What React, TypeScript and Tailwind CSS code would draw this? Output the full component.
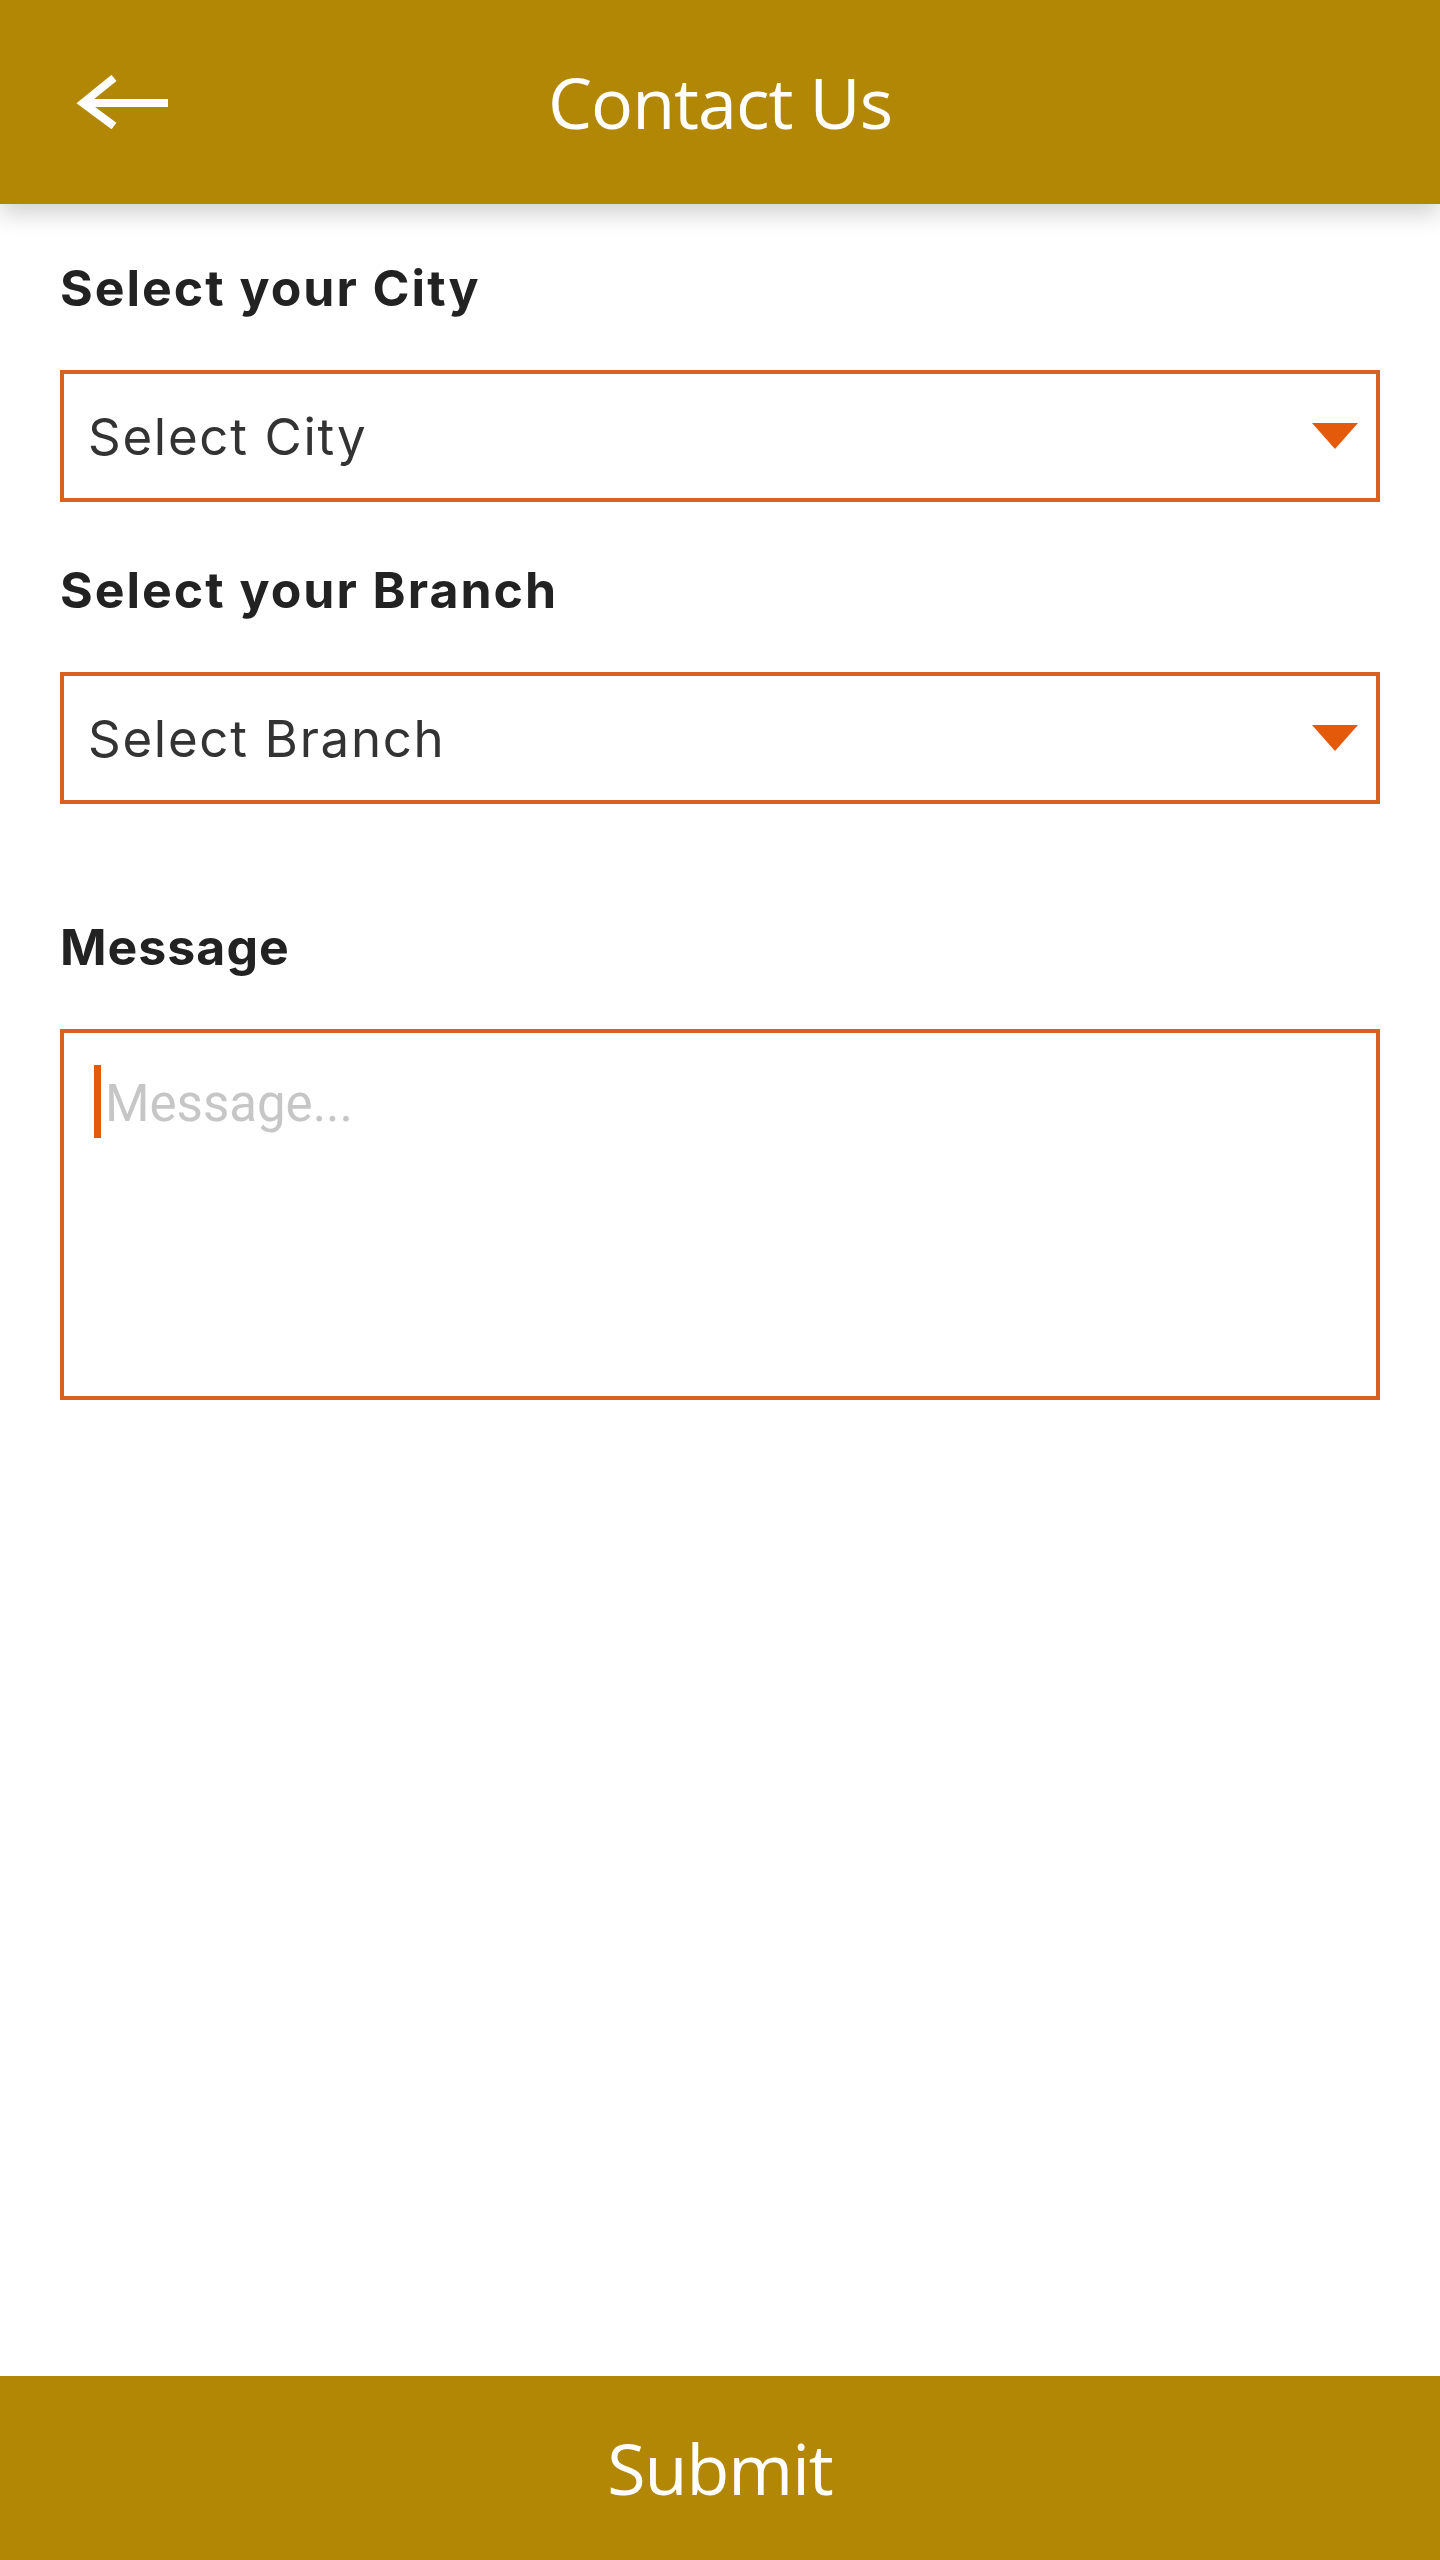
import { useState } from "react";

function BackArrow() {
  return (
    <svg width="96" height="56" viewBox="0 0 96 56" fill="none" className="block">
      <path d="M8 28 H94" stroke="white" strokeWidth="8" />
      <path d="M40 3 L9 28 L40 51" stroke="white" strokeWidth="8" strokeLinejoin="miter" />
    </svg>
  );
}

function Caret() {
  return (
    <svg width="46" height="26" viewBox="0 0 46 26" className="block">
      <polygon points="0,0 46,0 23,26" fill="#e35a0a" />
    </svg>
  );
}

function SelectBox({ placeholder }: { placeholder: string }) {
  return (
    <div className="flex h-[132px] w-full items-center justify-between border-4 border-[#d9611f] pl-[24px] pr-[18px]">
      <span className="text-[51px] leading-none tracking-[1.7px] text-[#333333] [font-family:Inter,'Liberation_Sans',sans-serif]">
        {placeholder}
      </span>
      <Caret />
    </div>
  );
}

export default function App() {
  const [message, setMessage] = useState("");

  return (
    <div className="flex min-h-screen flex-col bg-white">
      {/* Header */}
      <header className="relative z-10 flex h-[204px] items-center bg-[#b28706] shadow-[0_10px_22px_rgba(0,0,0,0.18)]">
        <button className="absolute left-[74px] top-[75px]">
          <BackArrow />
        </button>
        <h1 className="w-full text-center text-[70px] font-normal leading-none tracking-[-1px] text-white [font-family:'Open_Sans',sans-serif]">
          Contact Us
        </h1>
      </header>

      {/* Form */}
      <main className="flex-1 px-[60px] [font-family:Inter,'Liberation_Sans',sans-serif]">
        <label className="mt-[54px] block text-[50px] font-bold leading-[60px] tracking-[2px] text-[#222222]">
          Select your City
        </label>
        <div className="mt-[52px]">
          <SelectBox placeholder="Select City" />
        </div>

        <label className="mt-[58px] block text-[50px] font-bold leading-[60px] tracking-[2px] text-[#222222]">
          Select your Branch
        </label>
        <div className="mt-[52px]">
          <SelectBox placeholder="Select Branch" />
        </div>

        <label className="mt-[113px] block text-[50px] font-bold leading-[60px] tracking-[1px] text-[#222222]">
          Message
        </label>
        <div className="relative mt-[52px] h-[371px] w-full border-4 border-[#d9611f]">
          <span className="absolute left-[30px] top-[32px] h-[73px] w-[7px] bg-[#e35a0a]" />
          <textarea
            value={message}
            onChange={(e) => setMessage(e.target.value)}
            placeholder="Message..."
            className="h-full w-full resize-none bg-transparent pl-[41px] pt-[40px] text-[51px] leading-[62px] text-[#333333] outline-none placeholder:text-[#c6c6c6] [font-family:Roboto,sans-serif]"
          />
        </div>
      </main>

      {/* Submit */}
      <button className="flex h-[184px] w-full items-center justify-center bg-[#b28706] text-[70px] leading-none tracking-[-1px] text-white [font-family:'Open_Sans',sans-serif]">
        Submit
      </button>
    </div>
  );
}
